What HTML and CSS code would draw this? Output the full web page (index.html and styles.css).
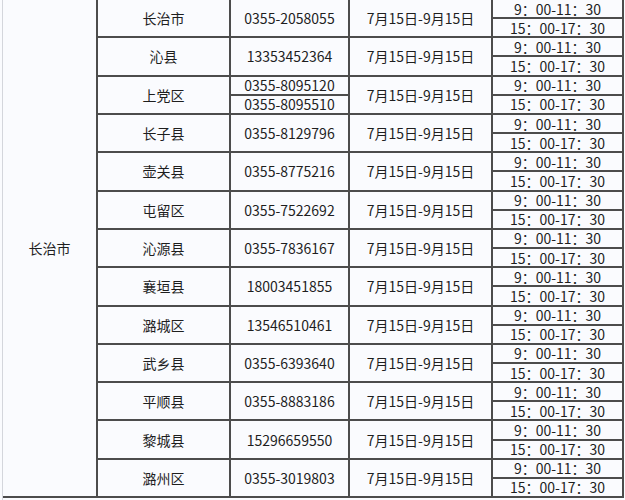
FILE: index.html
```html
<!DOCTYPE html>
<html lang="zh-CN">
<head>
<meta charset="utf-8">
<title>长治市</title>
<link rel="stylesheet" href="styles.css">
</head>
<body>
<div class="sheet">
  <div class="grid">
    <div class="cell c1 city">长治市</div>

    <div class="cell c2 span2">长治市</div>
    <div class="cell c3 span2">0355-2058055</div>
    <div class="cell c4 span2">7月15日-9月15日</div>
    <div class="cell c5">9：00-11：30</div>
    <div class="cell c5">15：00-17：30</div>

    <div class="cell c2 span2">沁县</div>
    <div class="cell c3 span2">13353452364</div>
    <div class="cell c4 span2">7月15日-9月15日</div>
    <div class="cell c5">9：00-11：30</div>
    <div class="cell c5">15：00-17：30</div>

    <div class="cell c2 span2">上党区</div>
    <div class="cell c3">0355-8095120</div>
    <div class="cell c4 span2">7月15日-9月15日</div>
    <div class="cell c5">9：00-11：30</div>
    <div class="cell c3">0355-8095510</div>
    <div class="cell c5">15：00-17：30</div>

    <div class="cell c2 span2">长子县</div>
    <div class="cell c3 span2">0355-8129796</div>
    <div class="cell c4 span2">7月15日-9月15日</div>
    <div class="cell c5">9：00-11：30</div>
    <div class="cell c5">15：00-17：30</div>

    <div class="cell c2 span2">壶关县</div>
    <div class="cell c3 span2">0355-8775216</div>
    <div class="cell c4 span2">7月15日-9月15日</div>
    <div class="cell c5">9：00-11：30</div>
    <div class="cell c5">15：00-17：30</div>

    <div class="cell c2 span2">屯留区</div>
    <div class="cell c3 span2">0355-7522692</div>
    <div class="cell c4 span2">7月15日-9月15日</div>
    <div class="cell c5">9：00-11：30</div>
    <div class="cell c5">15：00-17：30</div>

    <div class="cell c2 span2">沁源县</div>
    <div class="cell c3 span2">0355-7836167</div>
    <div class="cell c4 span2">7月15日-9月15日</div>
    <div class="cell c5">9：00-11：30</div>
    <div class="cell c5">15：00-17：30</div>

    <div class="cell c2 span2">襄垣县</div>
    <div class="cell c3 span2">18003451855</div>
    <div class="cell c4 span2">7月15日-9月15日</div>
    <div class="cell c5">9：00-11：30</div>
    <div class="cell c5">15：00-17：30</div>

    <div class="cell c2 span2">潞城区</div>
    <div class="cell c3 span2">13546510461</div>
    <div class="cell c4 span2">7月15日-9月15日</div>
    <div class="cell c5">9：00-11：30</div>
    <div class="cell c5">15：00-17：30</div>

    <div class="cell c2 span2">武乡县</div>
    <div class="cell c3 span2">0355-6393640</div>
    <div class="cell c4 span2">7月15日-9月15日</div>
    <div class="cell c5">9：00-11：30</div>
    <div class="cell c5">15：00-17：30</div>

    <div class="cell c2 span2">平顺县</div>
    <div class="cell c3 span2">0355-8883186</div>
    <div class="cell c4 span2">7月15日-9月15日</div>
    <div class="cell c5">9：00-11：30</div>
    <div class="cell c5">15：00-17：30</div>

    <div class="cell c2 span2">黎城县</div>
    <div class="cell c3 span2">15296659550</div>
    <div class="cell c4 span2">7月15日-9月15日</div>
    <div class="cell c5">9：00-11：30</div>
    <div class="cell c5">15：00-17：30</div>

    <div class="cell c2 span2">潞州区</div>
    <div class="cell c3 span2">0355-3019803</div>
    <div class="cell c4 span2">7月15日-9月15日</div>
    <div class="cell c5">9：00-11：30</div>
    <div class="cell c5">15：00-17：30</div>
  </div>
</div>
</body>
</html>
```

FILE: styles.css
```css
html, body {
  margin: 0;
  padding: 0;
  background: #fafbfe;
}

body {
  width: 625px;
  height: 500px;
  overflow: hidden;
  font-family: "Noto Sans CJK SC", "Liberation Sans", sans-serif;
  font-size: 14px;
  color: #1e1e1e;
}

.sheet {
  margin-left: 2px;
  border-left: 1px solid #d4d6dc;
  height: 500px;
}

.grid {
  display: grid;
  grid-template-columns: 95px 133px 119px 143px 131px;
  grid-template-rows: repeat(26, 19.166px);
}

.cell {
  box-sizing: border-box;
  display: flex;
  align-items: center;
  justify-content: center;
  border-right: 2px solid #4c4c4c;
  border-bottom: 2px solid #4c4c4c;
  line-height: 1;
  white-space: nowrap;
  overflow: hidden;
}

.c1 { grid-column: 1; }
.c2 { grid-column: 2; }
.c3 { grid-column: 3; }
.c4 { grid-column: 4; }
.c5 { grid-column: 5; }

.city { grid-row: 1 / span 26; }
.span2 { grid-row-end: span 2; }
```
